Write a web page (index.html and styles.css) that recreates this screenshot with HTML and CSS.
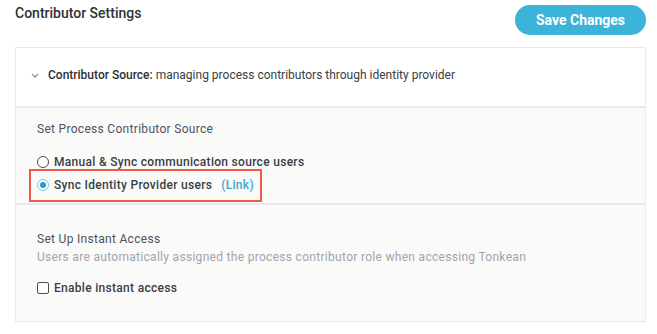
FILE: index.html
```html
<!DOCTYPE html>
<html lang="en">

<head>
    <meta charset="UTF-8">
    <meta name="viewport" content="width=device-width, initial-scale=1.0">
    <title>Contributor Settings</title>
    <link rel="stylesheet" href="styles.css">
</head>

<body>
    <!-- Top bar -->
    <div class="top-bar">
        <h2 class="title">Contributor Settings</h2>
        <button class="save">Save Changes</button>
    </div>

    <!-- Settings card -->
    <div class="card">
        <div class="card-header">
            <svg class="chevron" width="8" height="5" viewBox="0 0 8 5">
                <polyline points="1,1 4,4 7,1" fill="none" stroke="#8a8e96" stroke-width="1.3" />
            </svg>
            <span><b>Contributor Source:</b> managing process contributors through identity provider</span>
        </div>

        <div class="section source">
            <div class="label">Set Process Contributor Source</div>
            <label class="option">
                <span class="radio"></span>
                Manual &amp; Sync communication source users
            </label>
            <div class="highlight">
                <label class="option">
                    <span class="radio checked"></span>
                    Sync Identity Provider users
                    <a class="link">(Link)</a>
                </label>
            </div>
        </div>

        <div class="section access">
            <div class="label">Set Up Instant Access</div>
            <div class="desc">Users are automatically assigned the process contributor role when accessing Tonkean</div>
            <label class="option check-row">
                <span class="checkbox"></span>
                Enable instant access
            </label>
        </div>
    </div>
</body>

</html>
```

FILE: styles.css
```css
* {
    margin: 0;
    padding: 0;
    box-sizing: border-box;
}

body {
    font-family: Roboto, 'Liberation Sans', sans-serif;
    background: #ffffff;
    color: #34373d;
    padding: 5px 11px 0 15px;
}

.top-bar {
    display: flex;
    justify-content: space-between;
    align-items: flex-start;
}

.title {
    font-size: 14px;
    font-weight: 500;
    line-height: 18px;
    margin-top: -1px;
    color: #2f3238;
}

.save {
    width: 131px;
    height: 30px;
    border: none;
    border-radius: 15px;
    background: #3cb4d9;
    color: #ffffff;
    font-family: Roboto, 'Liberation Sans', sans-serif;
    font-size: 14px;
    font-weight: 700;
    cursor: pointer;
}

.card {
    margin-top: 12px;
    width: 631px;
    border: 1px solid #e9e9ee;
}

.card-header {
    display: flex;
    align-items: center;
    gap: 9px;
    padding: 19px 15px 23px;
    font-size: 12px;
    line-height: 16px;
    color: #3a3d44;
    border-bottom: 2px solid #e9e9ee;
}

.card-header b {
    font-weight: 500;
    color: #2c2f35;
}

.chevron {
    display: block;
}

.section {
    background: #fafaf9;
    padding-left: 21px;
    letter-spacing: 0.3px;
}

.source {
    padding-top: 14px;
    padding-bottom: 1px;
    border-bottom: 2px solid #e9e9ee;
}

.access {
    padding-top: 27px;
    padding-bottom: 25px;
}

.label {
    font-size: 12px;
    line-height: 14px;
    color: #4e525b;
}

.desc {
    margin-top: 4px;
    font-size: 12px;
    line-height: 14px;
    color: #a0a4ae;
}

.option {
    display: flex;
    align-items: center;
    gap: 5px;
    font-size: 12px;
    font-weight: 500;
    line-height: 16px;
    color: #3b3e45;
}

.source > .option {
    margin-top: 18px;
}

.highlight {
    display: inline-flex;
    margin-left: -8px;
    margin-top: -1px;
    padding: 6px 6px 7px 6px;
    border: 2px solid #f2594b;
}

.radio {
    width: 12px;
    height: 12px;
    border-radius: 50%;
    border: 1.3px solid #4a4d54;
    background: #ffffff;
    display: flex;
    align-items: center;
    justify-content: center;
}

.radio.checked {
    border: 1px solid #7cc9e6;
}

.radio.checked::after {
    content: '';
    width: 6px;
    height: 6px;
    border-radius: 50%;
    background: #1f9fd6;
}

.link {
    margin-left: 4px;
    color: #3aa7c9;
    cursor: pointer;
}

.check-row {
    margin-top: 16px;
}

.checkbox {
    width: 12px;
    height: 12px;
    border: 1.3px solid #4a4d54;
    border-radius: 2px;
    background: #ffffff;
}
```
